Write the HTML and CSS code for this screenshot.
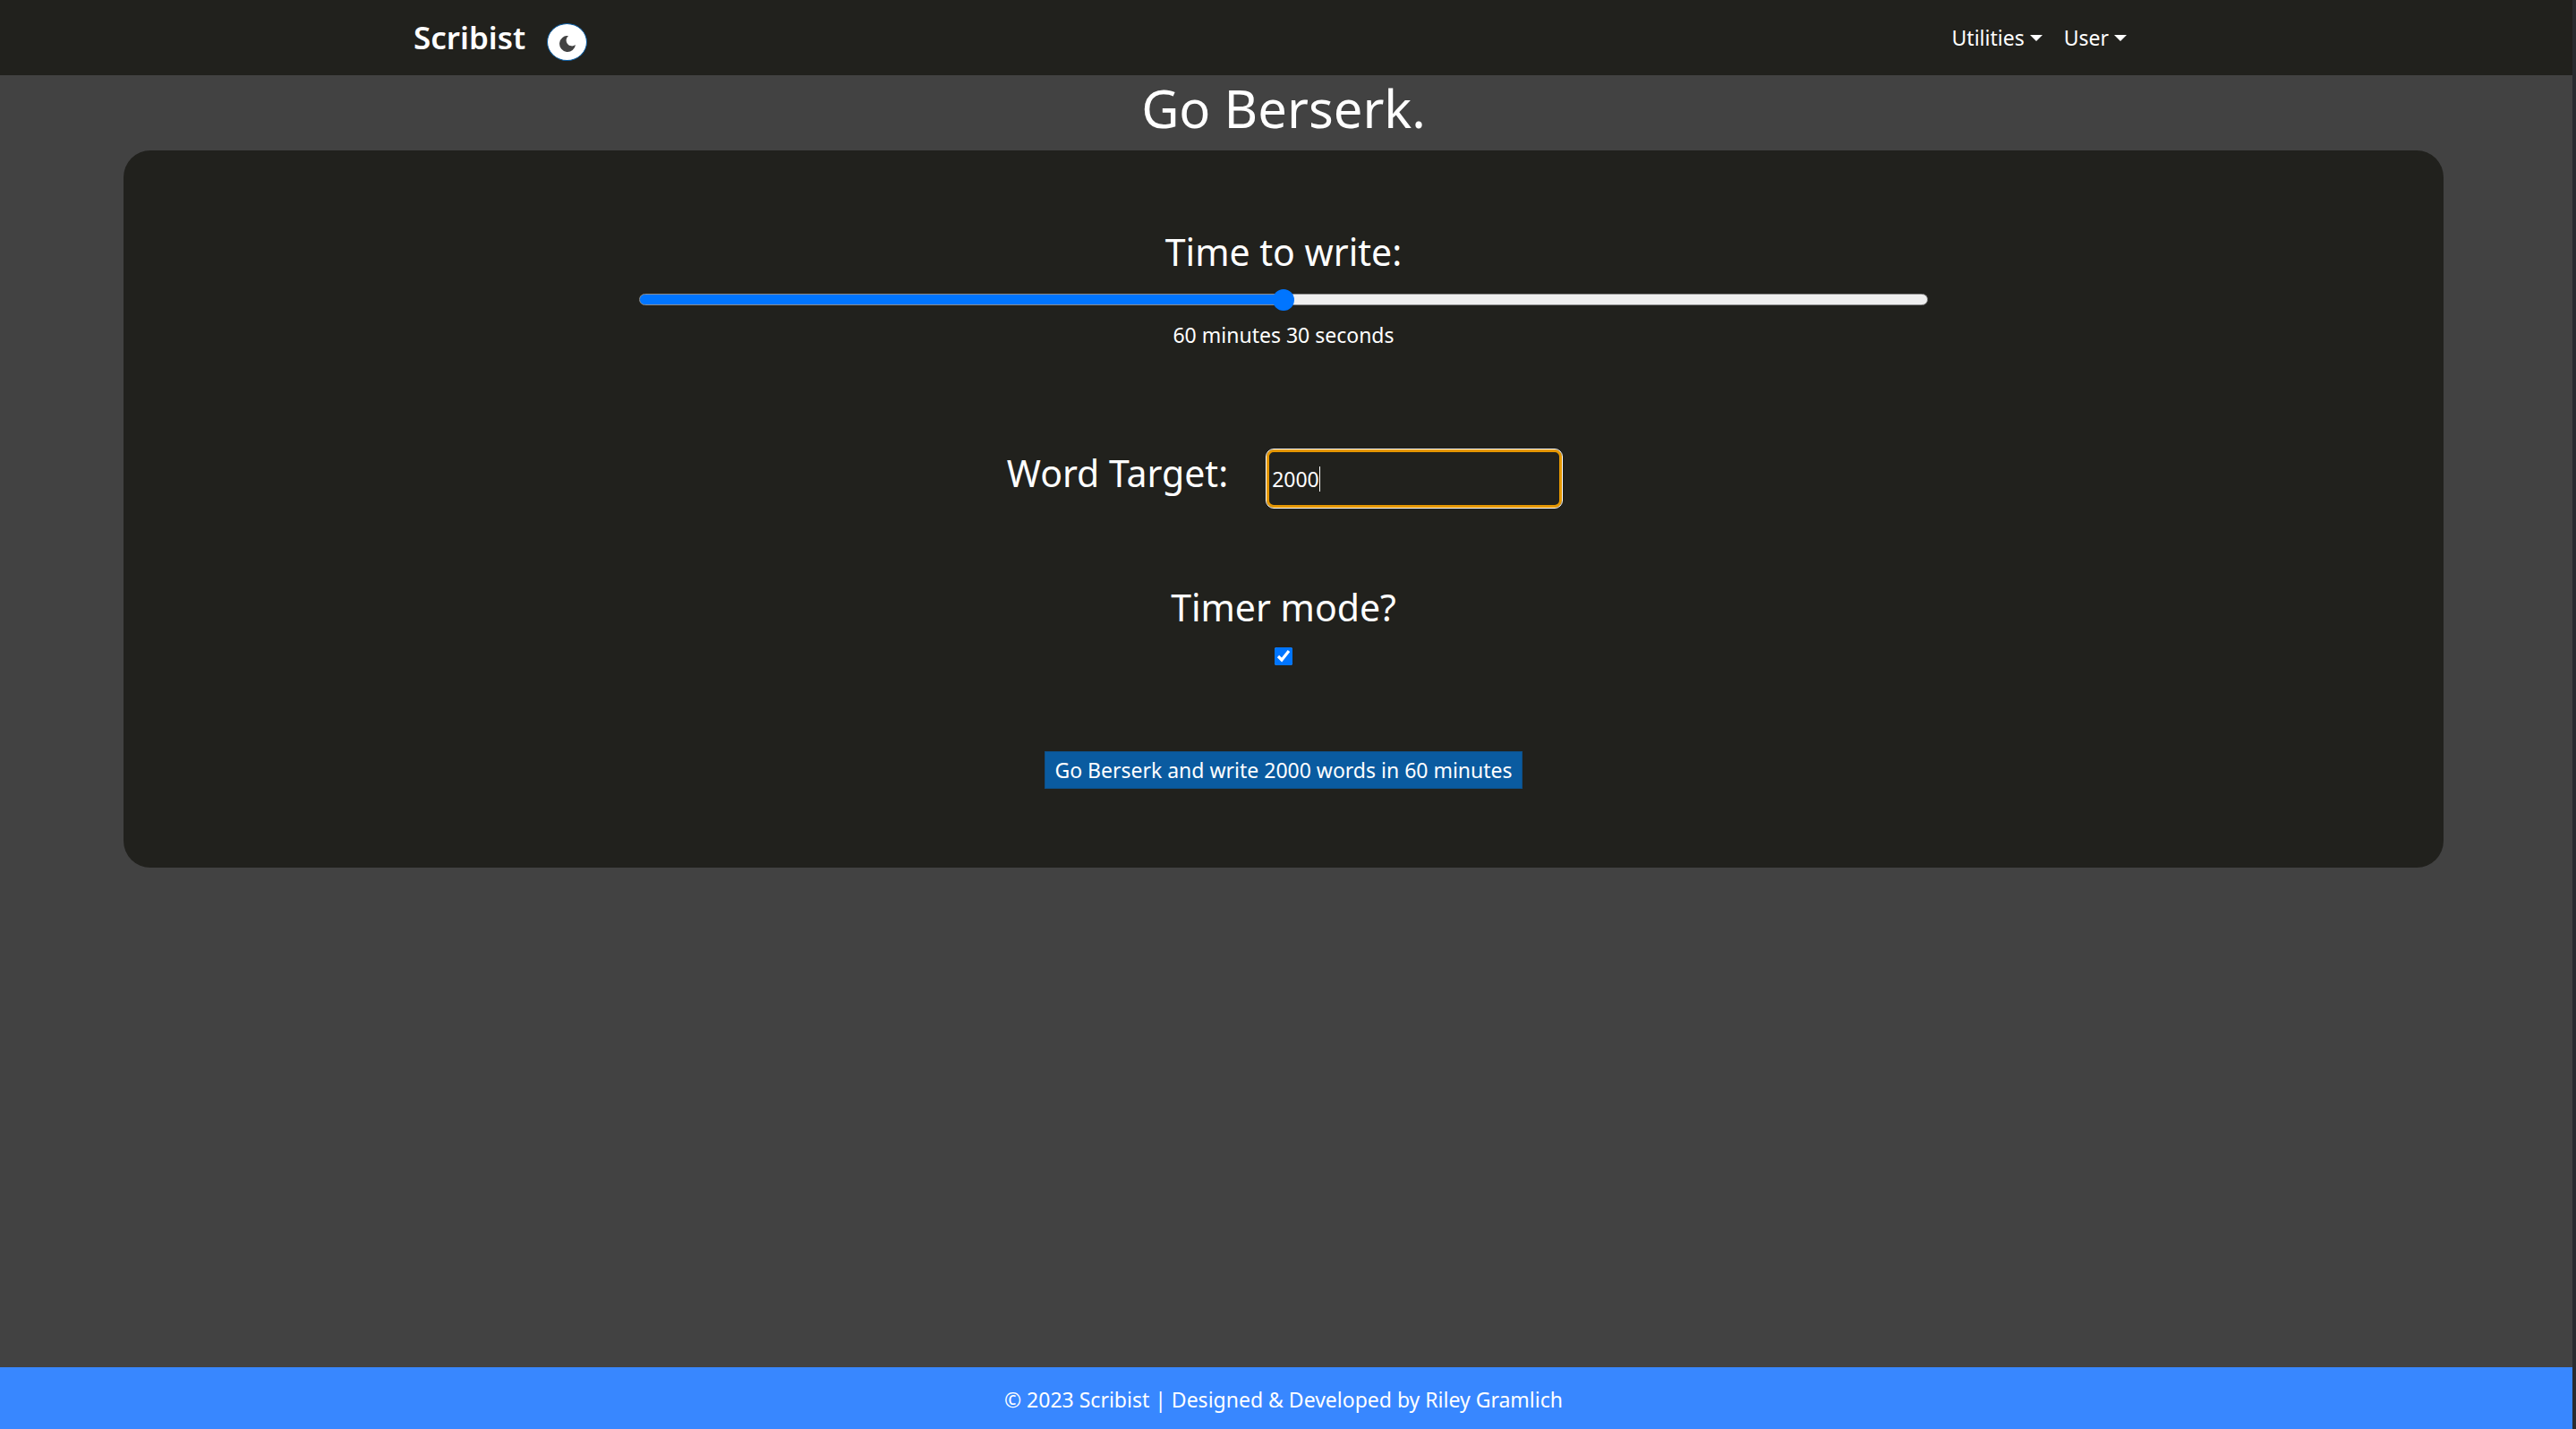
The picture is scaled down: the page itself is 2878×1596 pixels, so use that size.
FILE: index.html
```html
<!DOCTYPE html>
<html lang="en">
<head>
  <meta charset="utf-8">
  <meta name="viewport" content="width=device-width, initial-scale=1">
  <title>Scribist</title>
  <link rel="stylesheet" href="styles.css">
</head>
<body>
  <header class="navbar">
    <div class="navbar-inner">
      <a class="brand" href="#">Scribist</a>
      <button class="theme-toggle" type="button" aria-label="Toggle dark mode">
        <svg class="moon" viewBox="0 0 18 18" aria-hidden="true"><path d="M10 0A9 9 0 1 0 18 10A5.600 5.600 0 0 1 10 0Z"/></svg>
      </button>
      <nav class="menu">
        <button class="menu-item" type="button">Utilities<span class="caret"></span></button>
        <button class="menu-item" type="button">User<span class="caret"></span></button>
      </nav>
    </div>
  </header>
  <main class="content">
    <h1 class="title">Go Berserk.</h1>
    <form class="card">
      <label class="heading" for="time">Time to write:</label>
      <input class="slider" id="time" type="range" min="0" max="121" step="0.5" value="60.5">
      <output class="readout" for="time">60 minutes 30 seconds</output>
      <div class="target-row">
        <label class="heading" for="target">Word Target:</label>
        <div class="target-box">
          <input class="target" id="target" type="text" inputmode="numeric" value="2000">
          <span class="text-cursor"></span>
        </div>
      </div>
      <label class="heading" for="timer">Timer mode?</label>
      <input class="check" id="timer" type="checkbox" checked>
      <button class="submit" type="button">Go Berserk and write 2000 words in 60 minutes</button>
    </form>
  </main>
  <footer class="footer">© 2023 Scribist | Designed &amp; Developed by Riley Gramlich</footer>
</body>
</html>
```
FILE: styles.css
```css
* {
  box-sizing: border-box;
}

body {
  margin: 0;
  min-height: 100vh;
  display: flex;
  flex-direction: column;
  border-right: 4px solid #292b2f;
  background: #424242;
  color: #fff;
  font-family: "Noto Sans", sans-serif;
  font-size: 23px;
  line-height: 36px;
}

button,
input {
  font: inherit;
  color: inherit;
}

.navbar {
  background: #21211d;
  padding-right: 6px;
}

.navbar-inner {
  display: flex;
  align-items: center;
  max-width: 1980px;
  height: 84px;
  margin: 0 auto;
  padding: 0 48px 0 18px;
}

.brand {
  color: #fff;
  font-size: 35px;
  font-weight: 600;
  text-decoration: none;
}

.theme-toggle {
  display: flex;
  align-items: center;
  justify-content: center;
  width: 45px;
  height: 42px;
  margin: 10px 0 0 24px;
  padding: 4px 0 0;
  border: 1px solid #0a5ba0;
  border-radius: 50%;
  background: #fff;
}

.moon {
  width: 18px;
  height: 18px;
  fill: #424242;
}

.menu {
  display: flex;
  gap: 24px;
  margin-left: auto;
}

.menu-item {
  display: flex;
  align-items: center;
  gap: 6px;
  padding: 0;
  border: 0;
  background: none;
}

.caret {
  border: 7px solid transparent;
  border-top-color: #fff;
  border-bottom: 0;
}

.content {
  flex: 1;
  padding: 0 144px 0 138px;
}

.title {
  margin: 0 0 10px;
  font-size: 58px;
  font-weight: 400;
  line-height: 74px;
  text-align: center;
}

.card {
  display: flex;
  flex-direction: column;
  align-items: center;
  padding: 88px 24px;
  border-radius: 30px;
  background: #21211d;
}

.heading {
  font-size: 41px;
  line-height: 50px;
}

.slider {
  appearance: none;
  width: 1440px;
  max-width: 100%;
  height: 24px;
  margin: 16px 0 10px;
  background: none;
}

.slider::-webkit-slider-runnable-track {
  height: 13px;
  border: 1px solid #8c8c8c;
  border-radius: 7px;
  background: linear-gradient(to right, #0075ff 50%, #efefef 50%);
}

.slider::-webkit-slider-thumb {
  appearance: none;
  width: 24px;
  height: 24px;
  margin-top: -6px;
  border-radius: 50%;
  background: #0075ff;
}

.target-row {
  display: flex;
  align-items: baseline;
  gap: 42px;
  margin: 109px 0 85px;
  padding-left: 3px;
}

.target-box {
  position: relative;
}

.target {
  display: block;
  width: 332px;
  height: 67px;
  padding: 0 6px;
  border: 1px solid #fff;
  border-radius: 9px;
  outline: 0;
  background: #21211d;
  box-shadow: inset 0 0 0 3px #e59700;
}

/* Insertion point after the four digits */
.text-cursor {
  position: absolute;
  top: 20px;
  left: 60px;
  width: 1px;
  height: 28px;
  background: #fff;
}

.check {
  width: 20px;
  height: 20px;
  margin: 20px 0 96px;
  accent-color: #0075ff;
}

.submit {
  height: 42px;
  padding: 0 10px;
  border: 1px solid #0e4f87;
  background: #0a5ba0;
}

.footer {
  padding: 18px 6px 15px 0;
  background: #3887ff;
  text-align: center;
}
```
